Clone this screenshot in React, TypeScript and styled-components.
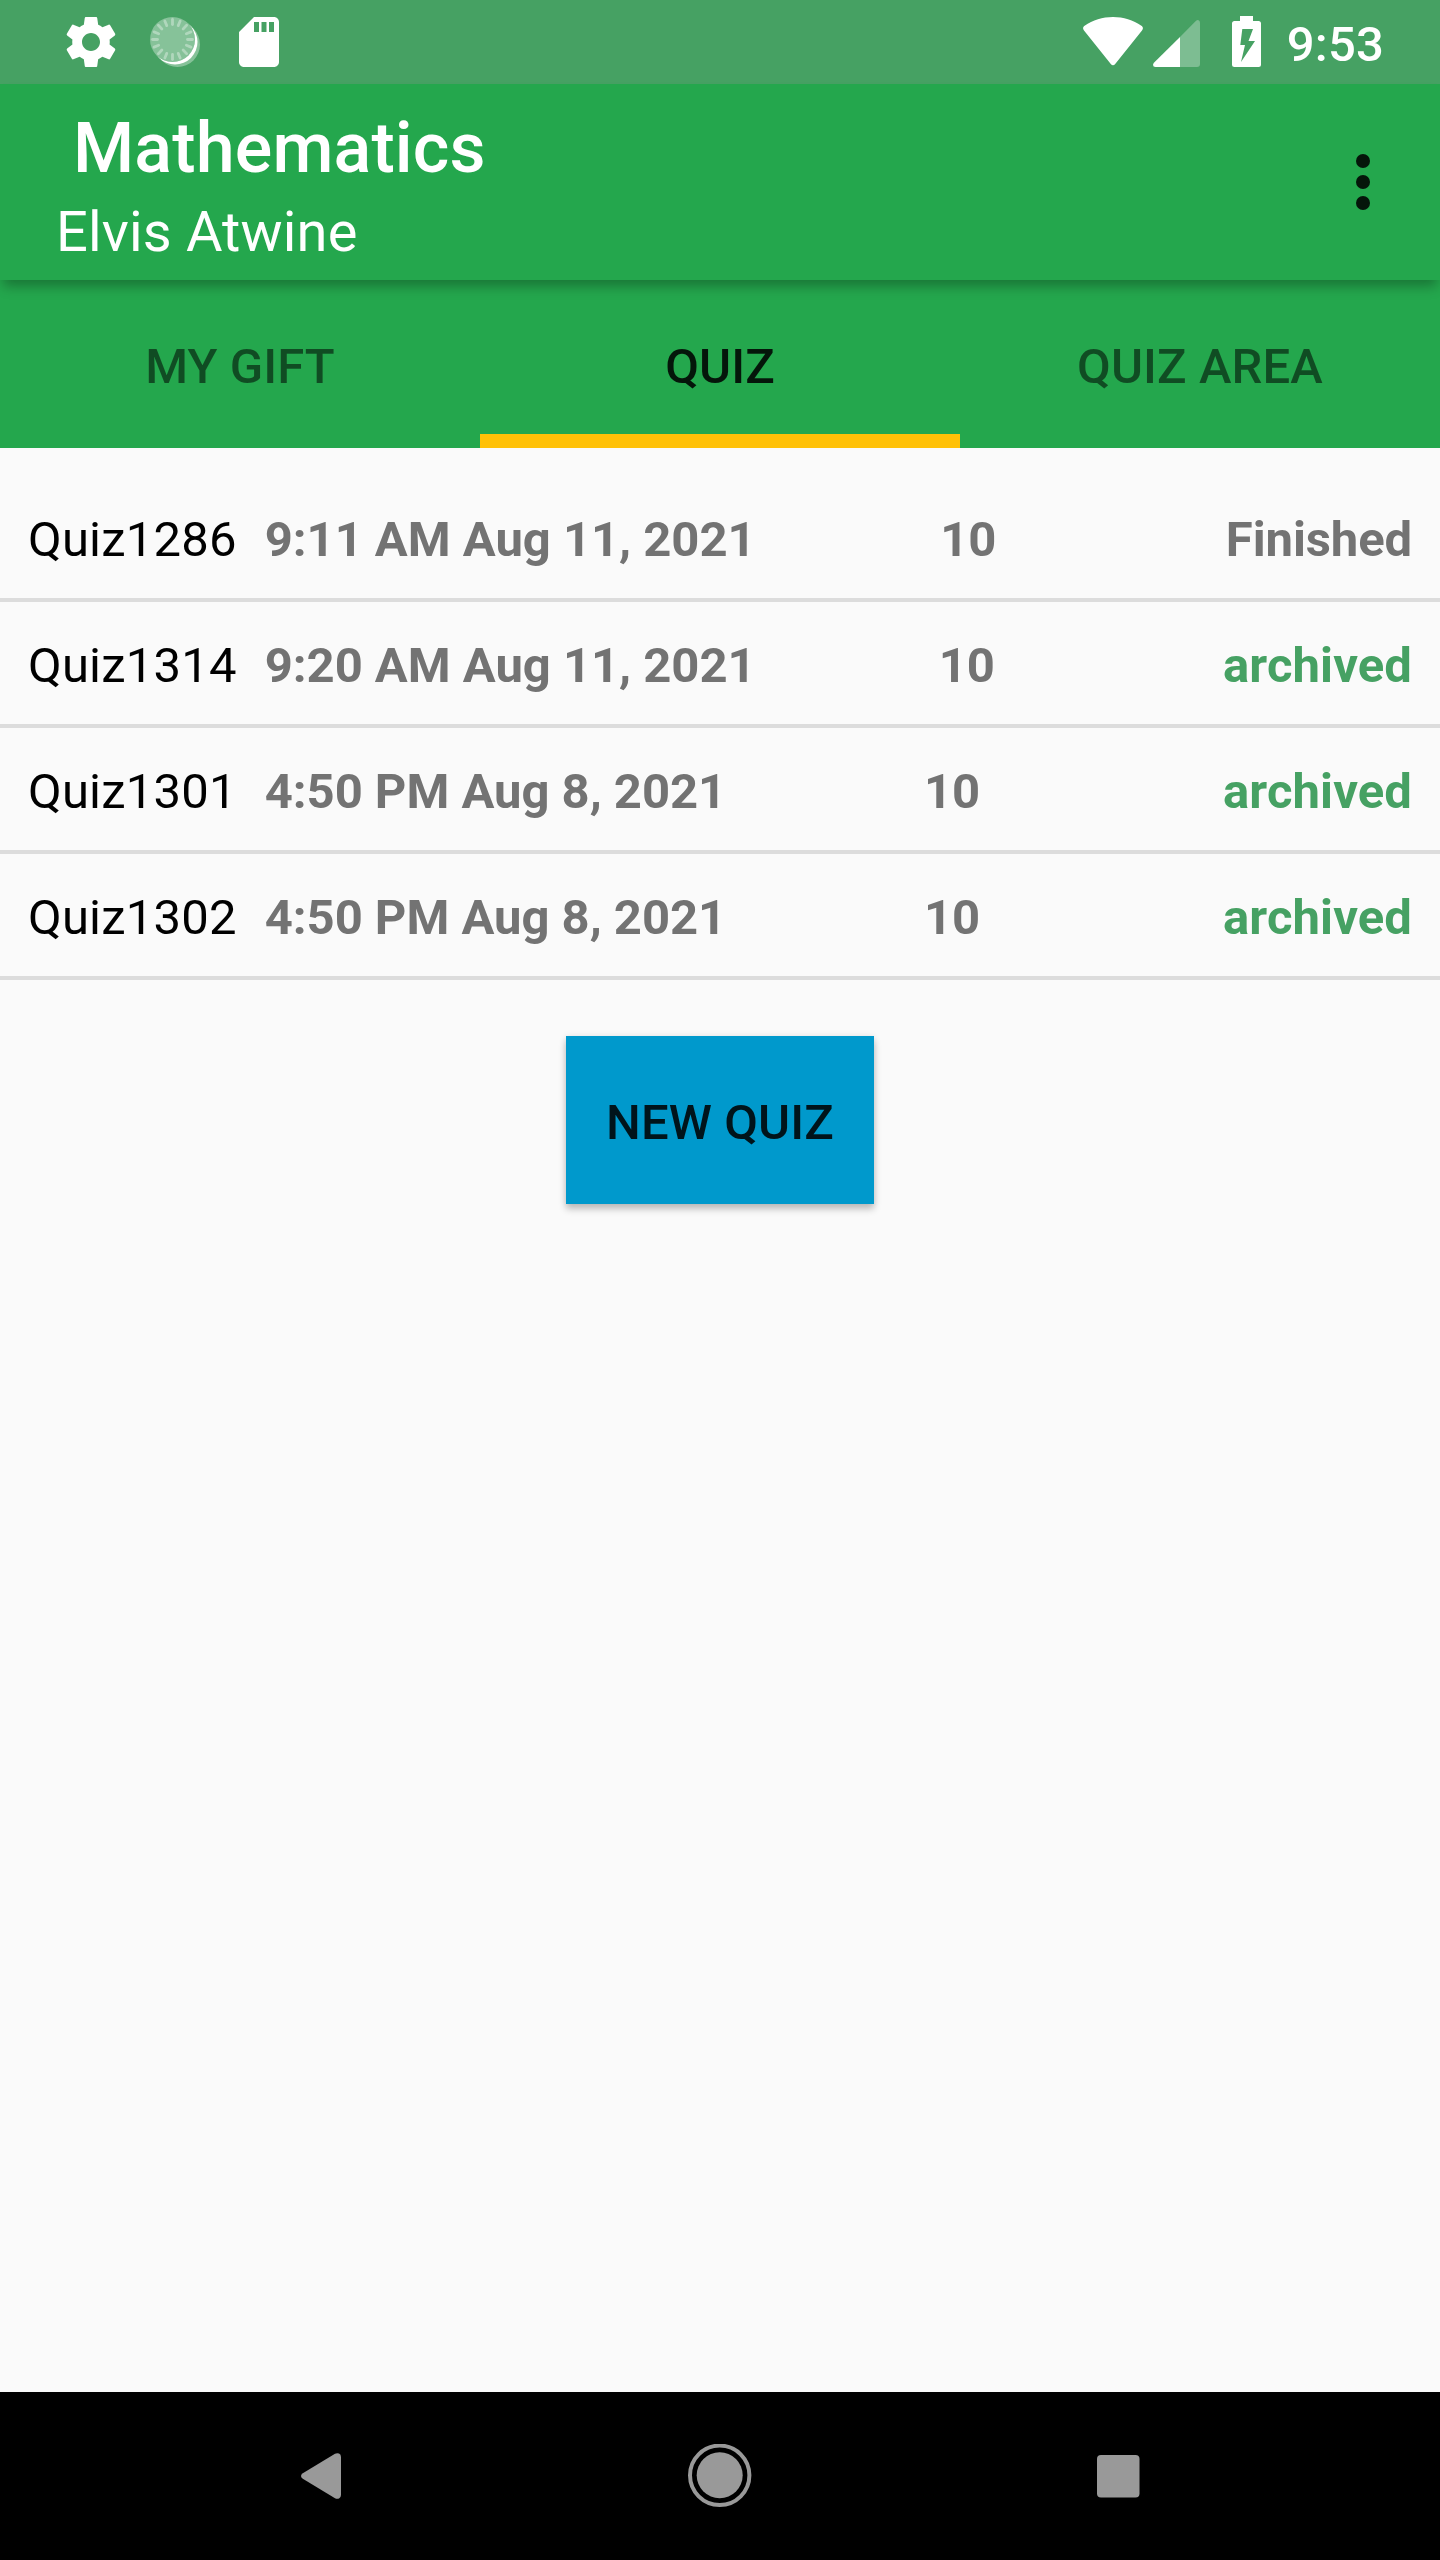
import React from "react";
import styled, { createGlobalStyle } from "styled-components";

const GlobalStyle = createGlobalStyle`
  * { box-sizing: border-box; }
  body { margin: 0; background: #fafafa; }
  button { border: 0; padding: 0; background: none; font: inherit; color: inherit; }
`;

const Screen = styled.div`
  width: 1440px;
  height: 2560px;
  display: flex;
  flex-direction: column;
  overflow: hidden;
  background: #fafafa;
  font-family: Roboto, "Liberation Sans", sans-serif;
  font-size: 49px;
  line-height: 57px;
  white-space: nowrap;
`;

const StatusBar = styled.header`
  flex: none;
  height: 84px;
  display: flex;
  justify-content: space-between;
  background: #46a163;
  color: #fff;
`;

const Notifications = styled.div`
  display: flex;
  gap: 24px;
  padding: 12px 0 0 61px;
`;

const SystemIcons = styled.div`
  display: flex;
  align-items: flex-start;
  padding: 12px 56px 0 0;
`;

const Glyph = styled.svg<{ $gap?: number }>`
  display: block;
  flex: none;
  margin-right: ${(p) => p.$gap ?? 0}px;
`;

const Clock = styled.time`
  font-weight: 500;
  letter-spacing: 0.2px;
  padding-top: 4px;
`;

const AppBar = styled.div`
  flex: none;
  position: relative;
  z-index: 1;
  height: 196px;
  display: flex;
  justify-content: space-between;
  background: #24a74d;
  color: #fff;
  box-shadow: 0 9px 12px -3px rgba(0, 0, 0, 0.3);
`;

const Titles = styled.div`
  display: flex;
  flex-direction: column;
  padding: 22px 0 0 56px;
`;

const Title = styled.h1`
  margin: 0;
  padding-left: 17px;
  font-size: 70px;
  font-weight: 500;
  letter-spacing: 0.15px;
  line-height: 84px;
`;

const Subtitle = styled.div`
  font-size: 56px;
  letter-spacing: 0.15px;
  line-height: 84px;
`;

const MenuButton = styled.button`
  width: 154px;
  display: flex;
  align-items: center;
  justify-content: center;
`;

const Tabs = styled.nav`
  flex: none;
  height: 168px;
  display: grid;
  grid-template-columns: repeat(3, 1fr);
  background: #24a74d;
`;

const Tab = styled.button<{ $active?: boolean }>`
  display: flex;
  align-items: center;
  justify-content: center;
  padding-top: 19px;
  border-bottom: 14px solid ${(p) => (p.$active ? "#ffc107" : "transparent")};
  font-weight: 500;
  letter-spacing: 0.1px;
  color: rgba(0, 0, 0, ${(p) => (p.$active ? 0.87 : 0.54)});
`;

const Content = styled.main`
  flex: 1;
  display: flex;
  flex-direction: column;
  align-items: center;
  padding-top: 28px;
`;

const QuizList = styled.ul`
  width: 100%;
  margin: 0 0 56px;
  padding: 0;
  list-style: none;
`;

const QuizRow = styled.li`
  height: 126px;
  display: flex;
  align-items: center;
  padding: 5px 28px 0;
  border-bottom: 4px solid #dcdcdc;
`;

const QuizName = styled.span`
  margin-right: 28px;
  letter-spacing: 0.2px;
  color: #000;
`;

const QuizDate = styled.span`
  flex: 1 1 auto;
  font-weight: 700;
  letter-spacing: -0.03px;
  color: #737373;
`;

const QuizCount = styled.span`
  flex: 1 1 auto;
  margin-right: 45px;
  font-weight: 700;
  color: #737373;
`;

const QuizStatus = styled.span<{ $archived: boolean }>`
  font-weight: 700;
  letter-spacing: ${(p) => (p.$archived ? 0.1 : -0.1)}px;
  color: ${(p) => (p.$archived ? "#46a163" : "#737373")};
`;

const NewQuizButton = styled.button`
  width: 308px;
  height: 168px;
  background: #0099cc;
  color: rgba(0, 0, 0, 0.87);
  font-weight: 500;
  letter-spacing: 0.1px;
  padding-top: 5px;
  box-shadow: 0 5px 7px rgba(0, 0, 0, 0.24), 0 0 7px rgba(0, 0, 0, 0.08);
`;

const NavBar = styled.footer`
  flex: none;
  height: 168px;
  display: flex;
  align-items: center;
  justify-content: space-between;
  padding: 0 281px 0 280px;
  background: #000;
`;

const NavButton = styled.button`
  width: 82px;
  height: 82px;
  display: flex;
  align-items: center;
  justify-content: center;
`;

const quizzes = [
  { name: "Quiz1286", date: "9:11 AM Aug 11, 2021", count: 10, status: "Finished" },
  { name: "Quiz1314", date: "9:20 AM Aug 11, 2021", count: 10, status: "archived" },
  { name: "Quiz1301", date: "4:50 PM Aug 8, 2021", count: 10, status: "archived" },
  { name: "Quiz1302", date: "4:50 PM Aug 8, 2021", count: 10, status: "archived" },
];

const tickAngles = Array.from({ length: 16 }, (_, i) => i * 22.5);

function SettingsIcon() {
  return (
    <Glyph width="60" height="60" viewBox="0 0 24 24" fill="#fff">
      <path d="M19.43 12.98c.04-.32.07-.64.07-.98s-.03-.66-.07-.98l2.11-1.65c.19-.15.24-.42.12-.64l-2-3.46c-.12-.22-.39-.3-.61-.22l-2.49 1c-.52-.4-1.08-.73-1.69-.98l-.38-2.65C14.46 2.18 14.25 2 14 2h-4c-.25 0-.46.18-.49.42l-.38 2.65c-.61.25-1.17.59-1.69.98l-2.49-1c-.23-.09-.49 0-.61.22l-2 3.46c-.13.22-.07.49.12.64l2.11 1.65c-.04.32-.07.65-.07.98s.03.66.07.98l-2.11 1.65c-.19.15-.24.42-.12.64l2 3.46c.12.22.39.3.61.22l2.49-1c.52.4 1.08.73 1.69.98l.38 2.65c.03.24.24.42.49.42h4c.25 0 .46-.18.49-.42l.38-2.65c.61-.25 1.17-.59 1.69-.98l2.49 1c.23.09.49 0 .61-.22l2-3.46c.12-.22.07-.49-.12-.64l-2.11-1.65zM12 15.6c-1.990 0-3.600-1.610-3.600-3.600s1.610-3.600 3.600-3.600 3.600 1.610 3.600 3.600-1.610 3.600-3.600 3.600z" />
    </Glyph>
  );
}

function SyncIcon() {
  return (
    <Glyph width="60" height="60" viewBox="0 0 60 60">
      <mask id="outside-disc">
        <rect width="60" height="60" fill="#fff" />
        <circle cx="27.5" cy="27.5" r="22.5" fill="#000" />
      </mask>
      <g mask="url(#outside-disc)">
        <circle cx="32.5" cy="32.5" r="22.5" fill="#fff" fillOpacity="0.35" />
        <circle cx="30" cy="30" r="22.5" fill="#fff" />
      </g>
      <circle cx="27.5" cy="27.5" r="22.5" fill="#fff" fillOpacity="0.35" />
      <g stroke="#fff" strokeOpacity="0.35" strokeWidth="2.8" strokeLinecap="round">
        {tickAngles.map((angle) => (
          <line key={angle} x1="27.5" y1="7.5" x2="27.5" y2="12.5" transform={`rotate(${angle} 27.5 27.5)`} />
        ))}
      </g>
    </Glyph>
  );
}

function SdCardIcon() {
  return (
    <Glyph width="60" height="60" viewBox="0 0 24 24" fill="#fff">
      <path d="M18 2h-8L4.02 8 4 20c0 1.1.9 2 2 2h12c1.1 0 2-.9 2-2V4c0-1.1-.9-2-2-2zm-6 6h-2V4h2v4zm3 0h-2V4h2v4zm3 0h-2V4h2v4z" />
    </Glyph>
  );
}

export default function App() {
  return (
    <>
      <GlobalStyle />
      <Screen>
        <StatusBar>
          <Notifications>
            <SettingsIcon />
            <SyncIcon />
            <SdCardIcon />
          </Notifications>
          <SystemIcons>
            <Glyph $gap={10} width="60" height="60" viewBox="0 0 60 60" fill="#fff">
              <path d="M1 18.500C-.4 16.800-.2 15 1.600 13.700C9.800 8 19.600 5 30 5S50.200 8 58.400 13.700C60.200 15 60.400 16.800 59 18.500L32.200 52Q30 54.500 27.800 52Z" />
            </Glyph>
            <Glyph $gap={32} width="47" height="60" viewBox="0 0 47 60" fill="#fff">
              <path fillOpacity="0.3" d="M27 25L42.800 9Q44.500 7.400 46 8.400Q47 9 47 11V52Q47 55 44 55H27Z" />
              <path d="M27 25V55H2.500Q0 55 0 52.800Q0 51.800 1.200 50.500Z" />
            </Glyph>
            <Glyph $gap={26} width="29" height="60" viewBox="0 0 29 60" fill="#fff">
              <path
                fillRule="evenodd"
                d="M8 4H21V9H26.500Q29 9 29 11.500V52.500Q29 55 26.500 55H2.500Q0 55 0 52.500V11.500Q0 9 2.500 9H8ZM10.300 17L8.300 33H13L9 50L23 29H16.500L21 17Z"
              />
            </Glyph>
            <Clock>9:53</Clock>
          </SystemIcons>
        </StatusBar>

        <AppBar>
          <Titles>
            <Title>Mathematics</Title>
            <Subtitle>Elvis Atwine</Subtitle>
          </Titles>
          <MenuButton aria-label="More options">
            <Glyph width="14" height="56" viewBox="0 0 14 56" fill="#05160a">
              <circle cx="7" cy="7" r="7" />
              <circle cx="7" cy="28" r="7" />
              <circle cx="7" cy="49" r="7" />
            </Glyph>
          </MenuButton>
        </AppBar>

        <Tabs>
          <Tab>MY GIFT</Tab>
          <Tab $active>QUIZ</Tab>
          <Tab>QUIZ AREA</Tab>
        </Tabs>

        <Content>
          <QuizList>
            {quizzes.map((quiz) => (
              <QuizRow key={quiz.name}>
                <QuizName>{quiz.name}</QuizName>
                <QuizDate>{quiz.date}</QuizDate>
                <QuizCount>{quiz.count}</QuizCount>
                <QuizStatus $archived={quiz.status === "archived"}>{quiz.status}</QuizStatus>
              </QuizRow>
            ))}
          </QuizList>
          <NewQuizButton>NEW QUIZ</NewQuizButton>
        </Content>

        <NavBar>
          <NavButton aria-label="Back">
            <Glyph width="40" height="46" viewBox="0 0 40 46" fill="#999">
              <path d="M1.800 20.200L34 .8Q36 -.4 38 .6Q40 1.600 40 4V42Q40 44.400 38 45.400Q36 46.400 34 45.200L1.800 25.800Q0 24.600 0 23Q0 21.400 1.800 20.200Z" />
            </Glyph>
          </NavButton>
          <NavButton aria-label="Home">
            <Glyph width="64" height="64" viewBox="0 0 64 64">
              <circle cx="31.700" cy="31.300" r="29.700" fill="none" stroke="#999" strokeWidth="4" />
              <circle cx="31.700" cy="31.300" r="23" fill="#999" />
            </Glyph>
          </NavButton>
          <NavButton aria-label="Recent apps">
            <Glyph width="43" height="43" viewBox="0 0 43 43" fill="#999">
              <rect width="42.500" height="42.500" rx="4" />
            </Glyph>
          </NavButton>
        </NavBar>
      </Screen>
    </>
  );
}
